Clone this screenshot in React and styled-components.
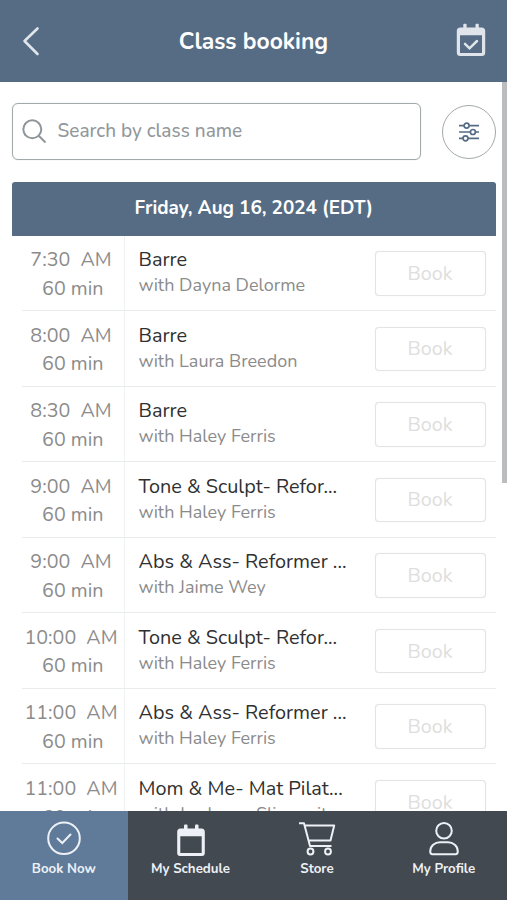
import React from "react";
import styled, { createGlobalStyle } from "styled-components";

const GlobalStyles = createGlobalStyle`
  * {
    box-sizing: border-box;
  }

  body {
    margin: 0;
    background: #fff;
    font-family: Nunito, Lato, "Open Sans", sans-serif;
  }

  button, input {
    font-family: inherit;
  }
`;

const Screen = styled.div`
  display: flex;
  flex-direction: column;
  height: 900px;
  overflow: hidden;
`;

const Header = styled.header`
  display: grid;
  grid-template-columns: 60px 1fr 60px;
  flex: none;
  align-items: center;
  height: 81.5px;
  padding: 2px 6px 0 1px;
  background: #566c85;
  color: #fff;
`;

const PageTitle = styled.h1`
  margin: 0;
  padding: 1px 0 0 5px;
  font-size: 22.9px;
  line-height: 30px;
  font-weight: 700;
  text-align: center;
  white-space: nowrap;
`;

const IconButton = styled.button`
  display: flex;
  justify-content: center;
  padding: 0 0 3px;
  border: 0;
  background: none;
  color: #dfe5eb;
`;

const Body = styled.main`
  display: flex;
  flex: 1;
  min-height: 0;
  overflow: hidden;
`;

const Content = styled.div`
  width: 484.5px;
  margin-left: 11.5px;
  padding-top: 21.5px;
`;

const ScrollThumb = styled.div`
  width: 5.5px;
  height: 401px;
  margin-left: auto;
  background: #bbbcbd;
`;

const SearchRow = styled.div`
  display: flex;
  align-items: center;
  justify-content: space-between;
  height: 57px;
`;

const SearchBox = styled.label`
  display: flex;
  align-items: center;
  width: 409.5px;
  height: 57px;
  padding-left: 9px;
  border: 1.6px solid #a3a9ab;
  border-radius: 6px;
  box-shadow: 0 0 0.8px #a3a9ab;
  color: #8f9598;
`;

const SearchInput = styled.input`
  flex: 1;
  min-width: 0;
  margin-left: 11px;
  padding: 0 0 1px;
  border: 0;
  outline: none;
  background: none;
  font-size: 19px;
  font-weight: 500;

  &::placeholder {
    color: #92989b;
    opacity: 1;
  }
`;

const FilterButton = styled.button`
  display: flex;
  align-items: center;
  justify-content: center;
  width: 54px;
  height: 54px;
  padding: 0;
  border: 1.4px solid #a3a9ab;
  border-radius: 50%;
  background: #fff;
  color: #566c85;
`;

const DateBar = styled.h2`
  height: 54px;
  margin: 21.5px 0 0;
  border-radius: 3px 3px 0 0;
  background: #566c85;
  color: #fff;
  font-size: 18.9px;
  line-height: 53px;
  font-weight: 700;
  text-align: center;
`;

const Row = styled.div`
  display: grid;
  grid-template-columns: 102.5px 1fr 111px;
  height: 75.57px;
  margin-left: 10.5px;
  padding-right: 10.5px;
  border-bottom: 1.5px solid #e9ebec;
`;

const TimeCell = styled.div`
  padding-top: 10.6px;
  border-right: 1px solid #eef2f3;
  color: #8b8b8b;
  font-size: 19.7px;
  line-height: 28.5px;
  text-align: center;
  white-space: pre;
`;

const Time = styled.div`
  margin-left: -3.5px;
`;

const ClassCell = styled.div`
  padding: 10.6px 0 0 14px;
  white-space: nowrap;
`;

const ClassName = styled.div`
  color: #303030;
  font-size: 19.85px;
  line-height: 28px;
`;

const Teacher = styled.div`
  color: #8b8b8b;
  font-size: 18px;
  line-height: 22.5px;
`;

const BookButton = styled.button`
  width: 111px;
  height: 44.5px;
  margin-top: 15.5px;
  padding: 0;
  border: 1.5px solid #e4e4e4;
  border-radius: 4px;
  box-shadow: 0 0 0.8px #dcdcdc;
  background: #fff;
  color: #dedede;
  font-size: 19.7px;
`;

const TabBar = styled.nav`
  display: grid;
  grid-template-columns: 127.5px 126px 127px 1fr;
  flex: none;
  height: 89px;
  background: #434950;
`;

const Tab = styled.a`
  display: flex;
  flex-direction: column;
  align-items: center;
  padding-top: 8.5px;
  background: ${(props) => (props.$active ? "#607b99" : "transparent")};
  color: #edf1f7;
  font-size: 13.3px;
  line-height: 20px;
  font-weight: 700;

  svg {
    margin-bottom: 2.5px;
  }
`;

const BackIcon = () => (
  <svg width="20" height="32" viewBox="0 0 20 32" fill="none" stroke="currentColor" strokeWidth="2.6">
    <path d="M16.500 4.500 L3.500 17 L16.500 30" strokeLinecap="round" strokeLinejoin="round" />
  </svg>
);

const BookingsIcon = () => (
  <svg width="30" height="34" viewBox="0 0 30 34" fill="currentColor">
    <rect x="7.300" y="0.800" width="3.300" height="7" rx="1" />
    <rect x="19.500" y="0.800" width="3.300" height="7" rx="1" />
    <path fillRule="evenodd" d="M4.500 4.500H25.500Q29.200 4.500 29.200 8V29.500Q29.200 33 25.700 33H4.300Q0.800 33 0.800 29.500V8Q0.800 4.500 4.500 4.500ZM4 12.200V30H26V12.200Z" />
    <path d="M9 20.800 L13.500 25.300 L21 18" fill="none" stroke="currentColor" strokeWidth="2.500" strokeLinecap="round" />
  </svg>
);

const SearchIcon = () => (
  <svg width="25" height="25" viewBox="0 0 25 25" fill="none" stroke="currentColor" strokeWidth="2">
    <circle cx="10.300" cy="10.300" r="9" />
    <path d="M16.500 16.500 L23.500 23.500" />
  </svg>
);

const FilterIcon = () => (
  <svg width="20" height="20" viewBox="0 0 20 20" fill="none" stroke="currentColor" strokeWidth="1.700">
    <path d="M0 3.600H5M10.200 3.600H20M0 10H11.300M16.500 10H20M0 16.300H3.900M9.100 16.300H20" />
    <circle cx="7.600" cy="3.600" r="2.500" />
    <circle cx="13.900" cy="10" r="2.500" />
    <circle cx="6.500" cy="16.300" r="2.500" />
  </svg>
);

const CheckIcon = () => (
  <svg width="36" height="37" viewBox="0 0 36 37" fill="none" stroke="currentColor" strokeWidth="2">
    <circle cx="18" cy="18.300" r="15.800" />
    <path d="M11.500 18.500 L16.300 23 L24.500 14.500" strokeLinecap="round" />
  </svg>
);

const ScheduleIcon = () => (
  <svg width="30" height="37" viewBox="0 0 30 37" fill="currentColor">
    <rect x="8" y="4.500" width="3.500" height="7" rx="1" />
    <rect x="19" y="4.500" width="3.500" height="7" rx="1" />
    <path fillRule="evenodd" d="M4.500 8.500H25.500Q28.800 8.500 28.800 12V33Q28.800 36 26 36H4Q1.200 36 1.200 33V12Q1.200 8.500 4.500 8.500ZM4.300 16.200V33H25.700V16.200Z" />
  </svg>
);

const CartIcon = () => (
  <svg width="38" height="37" viewBox="0 0 38 37" fill="none" stroke="currentColor" strokeWidth="2">
    <path d="M1 3.300H6L12 26H33.500M6.500 5.500H36.200L32.500 20.500H10.500" strokeLinejoin="round" />
    <circle cx="12.500" cy="31.500" r="2.900" />
    <circle cx="30" cy="31.500" r="2.900" />
  </svg>
);

const ProfileIcon = () => (
  <svg width="32" height="37" viewBox="0 0 32 37" fill="none" stroke="currentColor" strokeWidth="2">
    <circle cx="16" cy="10.700" r="7.800" />
    <path d="M2.200 31.500C2.200 25.500 7 22.300 12 22.300H20C25 22.300 29.800 25.500 29.800 31.500Q29.800 34.200 27.500 34.200H4.500Q2.200 34.200 2.200 31.500Z" />
  </svg>
);

const classes = [
  { time: "7:30  AM", name: "Barre", teacher: "Dayna Delorme" },
  { time: "8:00  AM", name: "Barre", teacher: "Laura Breedon" },
  { time: "8:30  AM", name: "Barre", teacher: "Haley Ferris" },
  { time: "9:00  AM", name: "Tone & Sculpt- Refor...", teacher: "Haley Ferris" },
  { time: "9:00  AM", name: "Abs & Ass- Reformer ...", teacher: "Jaime Wey" },
  { time: "10:00  AM", name: "Tone & Sculpt- Refor...", teacher: "Haley Ferris" },
  { time: "11:00  AM", name: "Abs & Ass- Reformer ...", teacher: "Haley Ferris" },
  { time: "11:00  AM", name: "Mom & Me- Mat Pilat...", teacher: "Jordanna Slimowitz" },
];

const App = () => {
  return (
    <>
      <GlobalStyles />
      <Screen>
        <Header>
          <IconButton aria-label="Back"><BackIcon /></IconButton>
          <PageTitle>Class booking</PageTitle>
          <IconButton aria-label="Bookings"><BookingsIcon /></IconButton>
        </Header>

        <Body>
          <Content>
            <SearchRow>
              <SearchBox>
                <SearchIcon />
                <SearchInput placeholder="Search by class name" />
              </SearchBox>
              <FilterButton aria-label="Filter"><FilterIcon /></FilterButton>
            </SearchRow>

            <DateBar>Friday, Aug 16, 2024 (EDT)</DateBar>

            {classes.map((item, i) => (
              <Row key={i}>
                <TimeCell>
                  <Time>{item.time}</Time>
                  <div>60 min</div>
                </TimeCell>
                <ClassCell>
                  <ClassName>{item.name}</ClassName>
                  <Teacher>with {item.teacher}</Teacher>
                </ClassCell>
                <BookButton>Book</BookButton>
              </Row>
            ))}
          </Content>
          <ScrollThumb />
        </Body>

        <TabBar>
          <Tab $active><CheckIcon />Book Now</Tab>
          <Tab><ScheduleIcon />My Schedule</Tab>
          <Tab><CartIcon />Store</Tab>
          <Tab><ProfileIcon />My Profile</Tab>
        </TabBar>
      </Screen>
    </>
  );
};

export default App;
